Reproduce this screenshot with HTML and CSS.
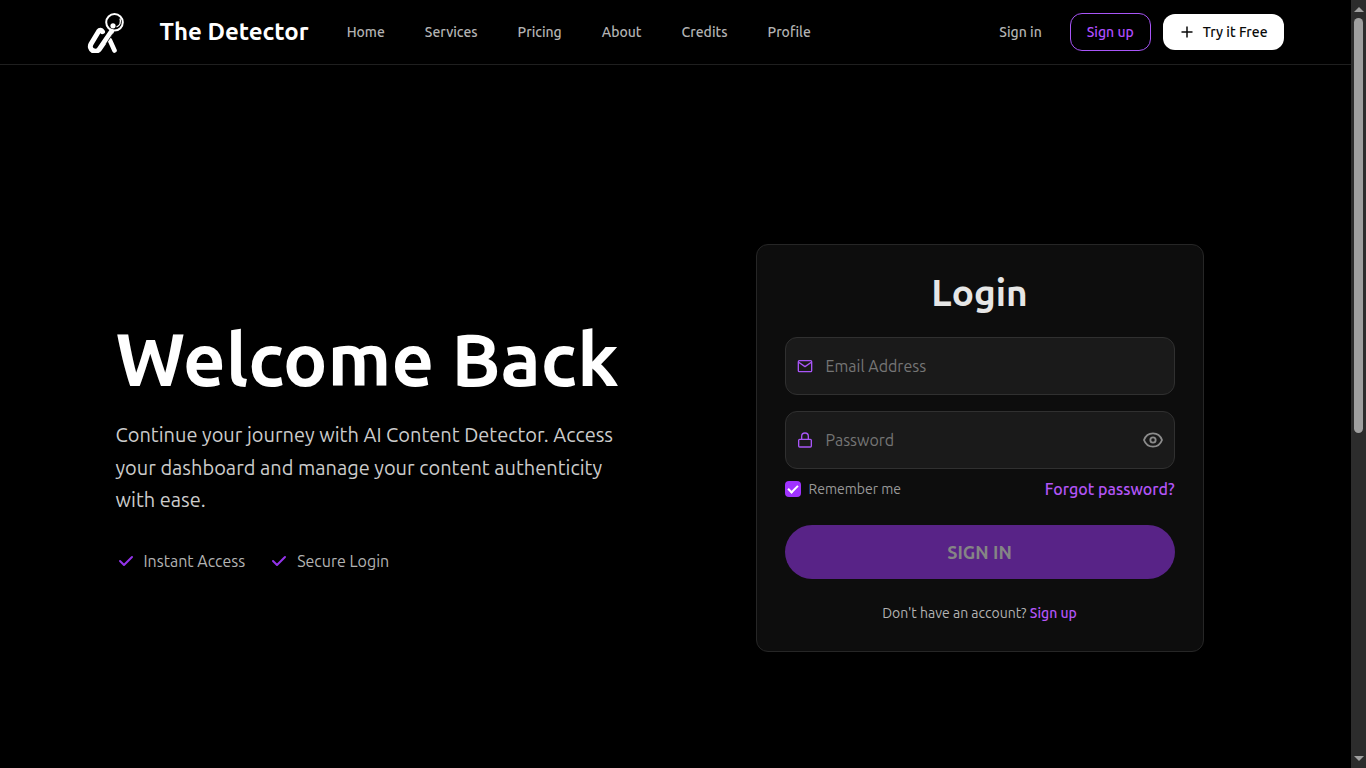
FILE: index.html
```html
<!DOCTYPE html>
<html lang="en">
<head>
<meta charset="utf-8">
<meta name="viewport" content="width=device-width, initial-scale=1">
<title>The Detector - Login</title>
<link rel="stylesheet" href="styles.css">
</head>
<body>
<div class="page">
  <header class="header">
    <div class="header-inner">
      <a class="brand" href="#">
        <svg class="brand-logo" viewBox="0 0 40 42" fill="none" stroke="#fff" aria-hidden="true">
          <circle cx="28.500" cy="11.300" r="8.300" stroke-width="2"/>
          <path d="M34 7.500c1 3.500 0 7-3.500 8.500" stroke-width="1.300"/>
          <circle cx="27" cy="14.800" r="2.600" fill="#fff" stroke="none"/>
          <path d="M25.500 20.500 13.500 38c-1.500 2.200-4.500 2.800-6.800 1.500s-3-4-1.700-6.500L12.500 20.500c1.200-1.800 3-1.500 4 .2" stroke-width="5" stroke-linecap="round"/>
          <path d="M24 29.500 28.500 39.500" stroke-width="4.600" stroke-linecap="round"/>
          <path d="M20 33 27 22.500" stroke="#000" stroke-width="0.800"/>
        </svg>
        <span class="brand-name">The Detector</span>
      </a>
      <nav class="nav" aria-label="Main">
        <a href="#">Home</a>
        <a href="#">Services</a>
        <a href="#">Pricing</a>
        <a href="#">About</a>
        <a href="#">Credits</a>
        <a href="#">Profile</a>
      </nav>
      <div class="actions">
        <a class="signin-link" href="#">Sign in</a>
        <a class="signup-button" href="#">Sign up</a>
        <button class="try-button" type="button">
          <svg class="plus-icon" viewBox="0 0 16 16" fill="none" stroke="currentColor" stroke-width="1.500" aria-hidden="true"><path d="M8 2.500v11M2.500 8h11"/></svg>
          Try it Free
        </button>
      </div>
    </div>
  </header>

  <main class="main">
    <div class="columns">
      <section class="intro">
        <h1>Welcome Back</h1>
        <p class="lead">Continue your journey with AI Content Detector. Access your dashboard and manage your content authenticity with ease.</p>
        <ul class="features">
          <li><svg class="check-icon" viewBox="0 0 20 20" fill="#9333ea" aria-hidden="true"><path fill-rule="evenodd" d="M16.707 5.293a1 1 0 010 1.414l-8 8a1 1 0 01-1.414 0l-4-4a1 1 0 011.414-1.414L8 12.586l7.293-7.293a1 1 0 011.414 0z" clip-rule="evenodd"/></svg>Instant Access</li>
          <li><svg class="check-icon" viewBox="0 0 20 20" fill="#9333ea" aria-hidden="true"><path fill-rule="evenodd" d="M16.707 5.293a1 1 0 010 1.414l-8 8a1 1 0 01-1.414 0l-4-4a1 1 0 011.414-1.414L8 12.586l7.293-7.293a1 1 0 011.414 0z" clip-rule="evenodd"/></svg>Secure Login</li>
        </ul>
      </section>

      <section class="card">
        <h2>Login</h2>
        <form class="form">
          <div class="field">
            <svg class="field-icon" viewBox="0 0 24 24" fill="none" stroke="currentColor" stroke-width="2" stroke-linejoin="round" aria-hidden="true"><rect x="2" y="4" width="20" height="16.500" rx="1.500"/><path d="m2 6 10 7 10-7"/></svg>
            <input type="email" aria-label="Email Address" placeholder="Email Address">
          </div>
          <div class="field">
            <svg class="field-icon" viewBox="0 0 24 24" fill="none" stroke="currentColor" stroke-width="2" stroke-linejoin="round" aria-hidden="true"><rect x="2.500" y="11" width="19" height="11.500" rx="1.500"/><path d="M7 11V6.500a5 5 0 0 1 10 0V11"/></svg>
            <input type="password" aria-label="Password" placeholder="Password">
            <button class="reveal" type="button" aria-label="Show password">
              <svg viewBox="0 0 24 24" fill="none" stroke="currentColor" stroke-width="2.200" stroke-linecap="round" stroke-linejoin="round" aria-hidden="true"><path d="M1.200 12C3 7 7 4 12 4s9 3 10.800 8C21 17 17 20 12 20S3 17 1.200 12z"/><circle cx="12" cy="12" r="3.200"/></svg>
            </button>
          </div>
          <div class="options">
            <label class="remember"><input type="checkbox" checked><span>Remember me</span></label>
            <a class="forgot" href="#">Forgot password?</a>
          </div>
          <button class="submit" type="submit" disabled>SIGN IN</button>
        </form>
        <p class="register">Don't have an account? <a href="#">Sign up</a></p>
      </section>
    </div>
  </main>
</div>
<div class="scrollbar" aria-hidden="true">
  <span class="arrow arrow-up"></span>
  <span class="thumb"></span>
  <span class="track-rest"></span>
  <span class="arrow arrow-down"></span>
</div>
</body>
</html>
```
FILE: styles.css
```css
* {
  box-sizing: border-box;
}

body {
  margin: 0;
  display: flex;
  height: 100vh;
  background: #000;
  color: #fff;
  font-family: Ubuntu, "Noto Sans", sans-serif;
  font-size: 16px;
}

a {
  color: inherit;
  text-decoration: none;
}

button,
input {
  font: inherit;
}

h1, h2, p, ul {
  margin: 0;
  padding: 0;
}

.page {
  flex: 1;
  min-width: 0;
  overflow-y: auto;
  scrollbar-width: none;
}

.header {
  border-bottom: 1px solid #1f1f1f;
}

.header-inner {
  display: flex;
  align-items: center;
  max-width: 1280px;
  height: 64px;
  margin: 0 auto;
  padding: 0 32px;
  font-size: 14px;
  font-weight: 500;
  line-height: 20px;
}

.brand {
  display: flex;
  align-items: center;
  gap: 34px;
  padding-left: 18px;
}

.brand-logo {
  width: 40px;
  height: 42px;
}

.brand-name {
  font-size: 24px;
  font-weight: 700;
  line-height: 32px;
  white-space: nowrap;
}

.nav {
  display: flex;
  gap: 40px;
  margin-left: 38px;
  color: #b3b3b3;
}

.actions {
  display: flex;
  align-items: center;
  gap: 12px;
  margin-left: auto;
  white-space: nowrap;
}

.signin-link {
  padding: 8px 16px;
  color: #b3b3b3;
}

.signup-button {
  padding: 8px 16px;
  border: 1px solid #a855f7;
  border-radius: 12px;
  color: #b04dff;
}

.try-button {
  display: flex;
  align-items: center;
  gap: 8px;
  height: 36px;
  padding: 0 16px;
  border: 0;
  border-radius: 12px;
  background: #fff;
  color: #0a0a0a;
}

.plus-icon {
  width: 16px;
  height: 16px;
}

.main {
  display: flex;
  align-items: center;
  min-height: 100vh;
  padding: 0 32px 2px;
}

.columns {
  display: grid;
  grid-template-columns: 1fr 1fr;
  align-items: center;
  gap: 96px;
  width: 100%;
  max-width: 1120px;
  margin: 0 auto;
}

h1 {
  font-size: 74px;
  font-weight: 600;
  line-height: 72px;
  white-space: nowrap;
}

.lead {
  margin-top: 24px;
  color: #ccc;
  font-size: 20px;
  line-height: 1.625;
}

.features {
  display: flex;
  gap: 24px;
  margin-top: 32px;
  color: #b3b3b3;
  line-height: 24px;
  list-style: none;
}

.features li {
  display: flex;
  align-items: center;
  gap: 8px;
}

.check-icon {
  width: 20px;
  height: 20px;
}

.card {
  width: 100%;
  max-width: 448px;
  margin: 0 auto;
  padding: 28px;
  border: 1px solid #262626;
  border-radius: 12px;
  background: #0d0d0d;
  text-align: center;
}

h2 {
  color: #e6e6e6;
  font-size: 37px;
  font-weight: 600;
  line-height: 40px;
}

.form {
  display: flex;
  flex-direction: column;
  gap: 16px;
  margin-top: 24px;
}

.field {
  display: flex;
  align-items: center;
  gap: 13px;
  height: 58px;
  padding: 0 11px;
  border: 1px solid #303030;
  border-radius: 12px;
  background: #1a1a1a;
}

.field-icon {
  flex: none;
  width: 16px;
  height: 16px;
  color: #a855f7;
}

.field input {
  flex: 1;
  min-width: 0;
  padding: 0;
  border: 0;
  outline: 0;
  background: transparent;
  color: #e6e6e6;
}

.field input::placeholder {
  color: #757575;
}

.reveal {
  display: flex;
  padding: 0;
  border: 0;
  background: none;
  color: #8c8c8c;
}

.reveal svg {
  width: 20px;
  height: 20px;
}

.options {
  display: flex;
  align-items: center;
  justify-content: space-between;
  margin-top: -8px;
  line-height: 24px;
}

.remember {
  display: flex;
  align-items: center;
  gap: 8px;
  color: #999;
  font-size: 14px;
}

.remember input {
  display: grid;
  place-items: center;
  width: 16px;
  height: 16px;
  margin: 0;
  appearance: none;
  border-radius: 4px;
  background: #a033ff;
}

.remember input:checked::before {
  content: "";
  width: 8px;
  height: 4px;
  border-bottom: 2px solid #fff;
  border-left: 2px solid #fff;
  transform: translateY(-1px) rotate(-45deg);
}

.forgot,
.register a {
  color: #b355f7;
  font-weight: 500;
}

.submit {
  height: 54px;
  margin-top: 8px;
  border: 0;
  border-radius: 27px;
  background: #582387;
  color: #858585;
  font-size: 18px;
  font-weight: 600;
}

.register {
  margin-top: 24px;
  color: #b3b3b3;
  font-size: 14px;
  line-height: 20px;
}

.scrollbar {
  display: flex;
  flex-direction: column;
  align-items: center;
  flex: none;
  width: 15px;
  padding: 7px 0;
  background: #2c2c2c;
}

.arrow {
  border: 5px solid transparent;
}

.arrow-up {
  border-top: 0;
  border-bottom-color: #9f9f9f;
}

.arrow-down {
  border-bottom: 0;
  border-top-color: #9f9f9f;
}

.thumb {
  flex: 415;
  width: 9px;
  margin-top: 6px;
  border-radius: 5px;
  background: #9f9f9f;
}

.track-rest {
  flex: 323;
}
```
